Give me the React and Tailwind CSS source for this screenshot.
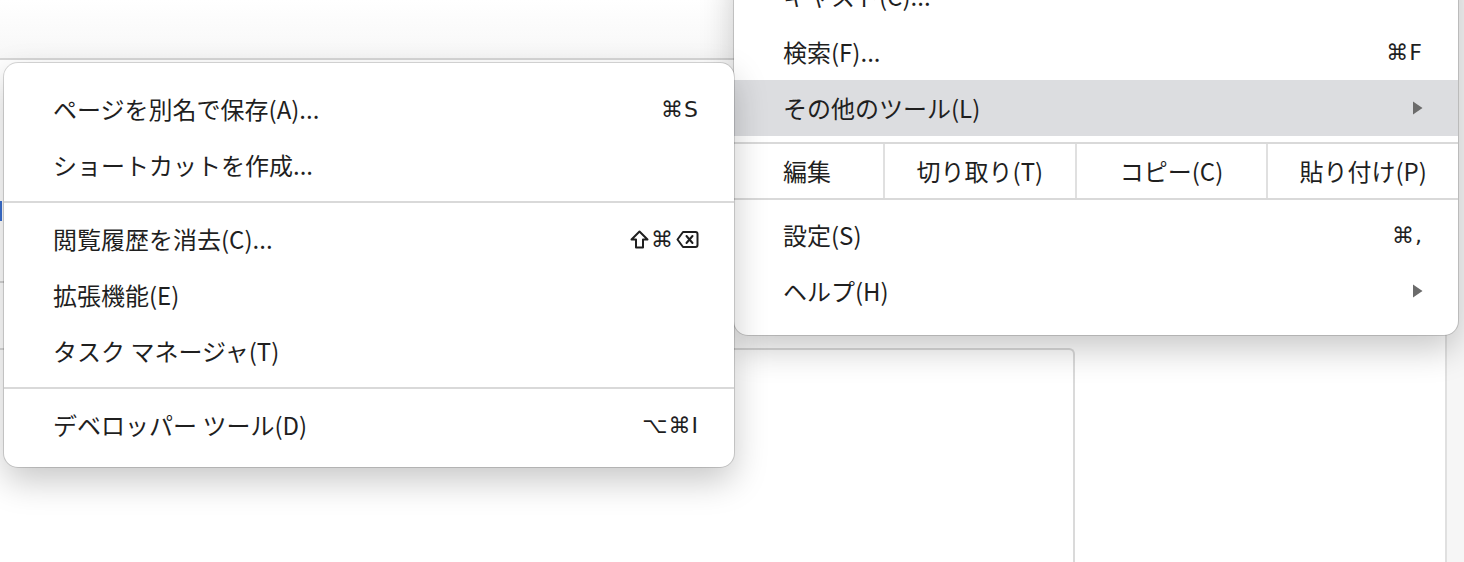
import React from 'react';

const font = { fontFamily: '"Noto Sans CJK JP", "Noto Sans", sans-serif' };

const Arrow = () => (
  <svg width="11" height="14" viewBox="0 0 11 14" className="text-[#6b6b6b]">
    <path d="M1 0.5 L10.5 7 L1 13.5 Z" fill="currentColor" />
  </svg>
);

const Shift = () => (
  <svg width="19" height="19" viewBox="0 0 19 19" className="text-[#1f1f1f]">
    <path d="M9.5 1.5 L17.5 9.5 H13 V17.5 H6 V9.5 H1.5 Z" fill="none" stroke="currentColor" strokeWidth="2" strokeLinejoin="round" />
  </svg>
);

const Delete = () => (
  <svg width="23" height="19" viewBox="0 0 23 19" className="text-[#1f1f1f]">
    <path d="M7 2 H19.5 A2 2 0 0 1 21.5 4 V15 A2 2 0 0 1 19.5 17 H7 L1.5 9.5 Z" fill="none" stroke="currentColor" strokeWidth="2" strokeLinejoin="round" />
    <path d="M10.5 6 L16.5 13 M16.5 6 L10.5 13" stroke="currentColor" strokeWidth="2" strokeLinecap="round" />
  </svg>
);

const Keys = ({ children }) => (
  <span className="flex items-center gap-[2px] text-[22px] tracking-[1px] text-[#1f1f1f] font-['DejaVu_Sans',sans-serif]">
    {children}
  </span>
);

const Item = ({ label, keys, sub, active }) => (
  <div
    className={`h-[56px] flex items-center justify-between pl-[49px] pr-[35px] ${
      active ? 'bg-[#dcdde0]' : ''
    }`}
  >
    <span className="text-[24px] text-[#1f1f1f]">{label}</span>
    {keys && <Keys>{keys}</Keys>}
    {sub && <Arrow />}
  </div>
);

const Sep = () => <div className="h-[2px] my-[8px] bg-[#d9d9d9]" />;

const App = () => {
  return (
    <div className="relative w-[1464px] h-[562px] overflow-hidden bg-white" style={font}>
      {/* page behind the menus */}
      <div className="flex h-full">
        <div className="flex-1 flex flex-col">
          <div className="h-[60px] border-b-2 border-[#d6d6d6] bg-gradient-to-b from-white to-[#f7f7f7]" />
          <div className="h-[221px] pt-[141px]">
            <div className="w-[2px] h-[20px] bg-[#3b6fd0]" />
          </div>
          <div className="h-[67px] border-t-2 border-[#d6d6d6]" />
          <div className="flex flex-1">
            <div className="w-[1075px] border-t-2 border-r-2 border-[#dadada] rounded-tr-[6px]" />
            <div className="flex-1" />
          </div>
        </div>
        <div className="w-[19px] border-l-2 border-[#e0e0e0] bg-[#f6f6f6]" />
      </div>

      {/* main menu */}
      <div className="absolute left-[734px] top-[-48px] w-[724px] rounded-[14px] bg-white pt-[16px] pb-[16px] ring-1 ring-black/15 shadow-[0_14px_34px_rgba(0,0,0,0.22)]">
        <Item label="キャスト(C)..." />
        <Item label="検索(F)..." keys="⌘F" />
        <Item label="その他のツール(L)" sub active />
        <div className="h-[6px]" />
        <div className="grid grid-cols-[149px_1fr_1fr_1fr] h-[58px] border-y-2 border-[#d9d9d9] text-[24px] text-[#1f1f1f]">
          <div className="flex items-center pl-[49px]">編集</div>
          <div className="flex items-center justify-center border-l-2 border-[#e0e0e0]">切り取り(T)</div>
          <div className="flex items-center justify-center border-l-2 border-[#e0e0e0]">コピー(C)</div>
          <div className="flex items-center justify-center border-l-2 border-[#e0e0e0]">貼り付け(P)</div>
        </div>
        <div className="h-[7px]" />
        <Item label="設定(S)" keys="⌘," />
        <Item label="ヘルプ(H)" sub />
      </div>

      {/* submenu */}
      <div className="absolute left-[4px] top-[63px] w-[730px] rounded-[14px] bg-white pt-[18px] pb-[14px] ring-1 ring-black/15 shadow-[0_14px_34px_rgba(0,0,0,0.22)]">
        <Item label="ページを別名で保存(A)..." keys="⌘S" />
        <Item label="ショートカットを作成..." />
        <Sep />
        <Item
          label="閲覧履歴を消去(C)..."
          keys={
            <>
              <Shift />
              <span>⌘</span>
              <Delete />
            </>
          }
        />
        <Item label="拡張機能(E)" />
        <Item label="タスク マネージャ(T)" />
        <Sep />
        <Item label="デベロッパー ツール(D)" keys="⌥⌘I" />
      </div>
    </div>
  );
};

export default App;
